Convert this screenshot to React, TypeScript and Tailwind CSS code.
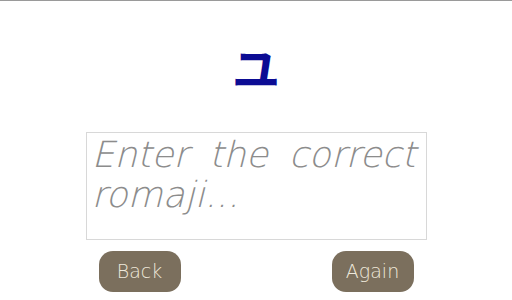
export default function App() {
  return (
    <div className="w-[512px] h-[300px] bg-white border-t border-[#9a9a9a] flex flex-col items-center overflow-hidden font-['DejaVu_Sans_Light','DejaVu_Sans',sans-serif]">
      <div className="mt-[36px] h-[58px] flex items-center justify-center text-[48px] leading-none font-semibold text-[#0c0c94] font-['Noto_Sans_CJK_JP',sans-serif]">
        ユ
      </div>
      <textarea
        placeholder="Enter the correct romaji..."
        className="mt-[37px] w-[341px] h-[108px] border border-[#d8d8d8] pl-[5px] pr-[10px] pt-[2px] resize-none text-[36px] leading-[40px] italic font-extralight text-justify text-[#555] placeholder:text-[#8c8c8c] outline-none"
      />
      <div className="mt-[11px] w-[315px] flex justify-between">
        <button className="w-[82px] h-[41px] rounded-[14px] bg-[#7b6f5d] text-[#efe9dc] text-[19px] font-extralight">
          Back
        </button>
        <button className="w-[82px] h-[41px] rounded-[14px] bg-[#7b6f5d] text-[#efe9dc] text-[19px] font-extralight">
          Again
        </button>
      </div>
    </div>
  );
}
